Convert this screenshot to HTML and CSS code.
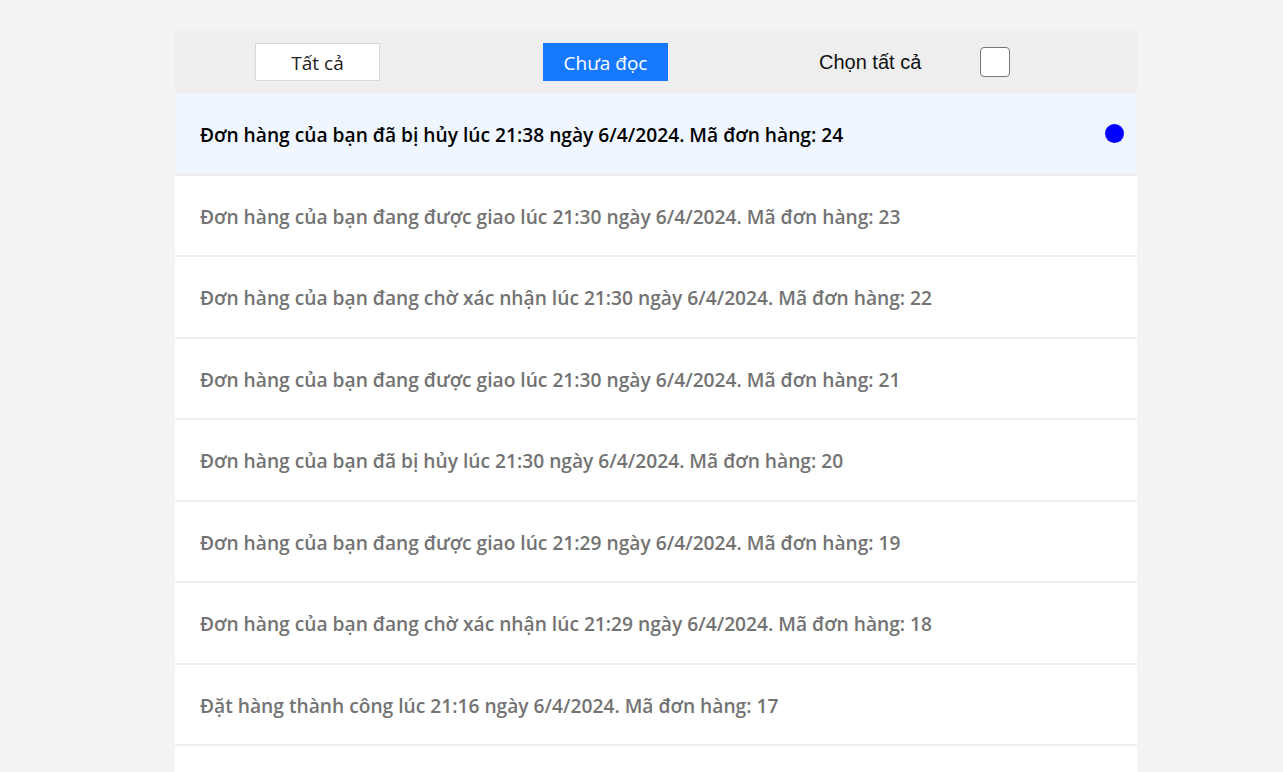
FILE: index.html
```html
<!DOCTYPE html>
<html lang="vi">
<head>
<meta charset="utf-8">
<title>Thông báo</title>
<link rel="stylesheet" href="styles.css">
</head>
<body>
<div class="panel">
  <div class="toolbar">
    <button class="tab">Tất cả</button>
    <button class="tab tab-active">Chưa đọc</button>
    <label class="select-all">
      <span class="select-label">Chọn tất cả</span>
      <span class="checkbox"></span>
    </label>
  </div>
  <ul class="list">
    <li class="item unread"><span class="msg">Đơn hàng của bạn đã bị hủy lúc 21:38 ngày 6/4/2024. Mã đơn hàng: 24</span><span class="dot"></span></li>
    <li class="item"><span class="msg">Đơn hàng của bạn đang được giao lúc 21:30 ngày 6/4/2024. Mã đơn hàng: 23</span></li>
    <li class="item"><span class="msg">Đơn hàng của bạn đang chờ xác nhận lúc 21:30 ngày 6/4/2024. Mã đơn hàng: 22</span></li>
    <li class="item"><span class="msg">Đơn hàng của bạn đang được giao lúc 21:30 ngày 6/4/2024. Mã đơn hàng: 21</span></li>
    <li class="item"><span class="msg">Đơn hàng của bạn đã bị hủy lúc 21:30 ngày 6/4/2024. Mã đơn hàng: 20</span></li>
    <li class="item"><span class="msg">Đơn hàng của bạn đang được giao lúc 21:29 ngày 6/4/2024. Mã đơn hàng: 19</span></li>
    <li class="item"><span class="msg">Đơn hàng của bạn đang chờ xác nhận lúc 21:29 ngày 6/4/2024. Mã đơn hàng: 18</span></li>
    <li class="item"><span class="msg">Đặt hàng thành công lúc 21:16 ngày 6/4/2024. Mã đơn hàng: 17</span></li>
  </ul>
</div>
</body>
</html>
```
FILE: styles.css
```css
html, body {
  margin: 0;
  padding: 0;
  background: #f3f3f3;
  height: 100%;
  overflow: hidden;
}
body {
  font-family: "Open Sans", "Noto Sans", sans-serif;
}
.panel {
  width: 962px;
  min-height: 800px;
  margin: 31px 0 0 175px;
  background: #ffffff;
}
.toolbar {
  height: 63px;
  background: #eeeeee;
  display: flex;
  align-items: flex-start;
  padding: 12px 0 0 80px;
  box-sizing: border-box;
}
.tab {
  width: 125px;
  height: 38px;
  box-sizing: border-box;
  border: 1px solid #d9d9d9;
  background: #ffffff;
  color: #222;
  font-family: "Open Sans", "Noto Sans", sans-serif;
  font-size: 19px;
  padding: 2px 0 0;
  margin: 0;
}
.tab-active {
  margin-left: 163px;
  background: #1677ff;
  border-color: #1677ff;
  color: #ffffff;
}
.select-all {
  display: flex;
  align-items: center;
  height: 38px;
  margin-left: 151px;
}
.select-label {
  font-family: "Liberation Sans", Arial, sans-serif;
  font-size: 20px;
  color: #111;
}
.checkbox {
  width: 30px;
  height: 30px;
  box-sizing: border-box;
  border: 1px solid #767676;
  border-radius: 4px;
  background: #fff;
  margin-left: 59px;
}
.list {
  list-style: none;
  margin: 0;
  padding: 0;
}
.item {
  height: 81.5px;
  box-sizing: border-box;
  border-bottom: 2px solid #eeeeee;
  display: flex;
  align-items: center;
  justify-content: space-between;
  padding: 0 13px 0 25px;
  background: #ffffff;
}
.item.unread {
  background: #eff6ff;
}
.msg {
  font-size: 19.2px;
  font-weight: 600;
  color: #737373;
  padding-top: 2px;
}
.unread .msg {
  color: #000000;
}
.dot {
  width: 19px;
  height: 19px;
  border-radius: 50%;
  background: #0000ff;
}
```
